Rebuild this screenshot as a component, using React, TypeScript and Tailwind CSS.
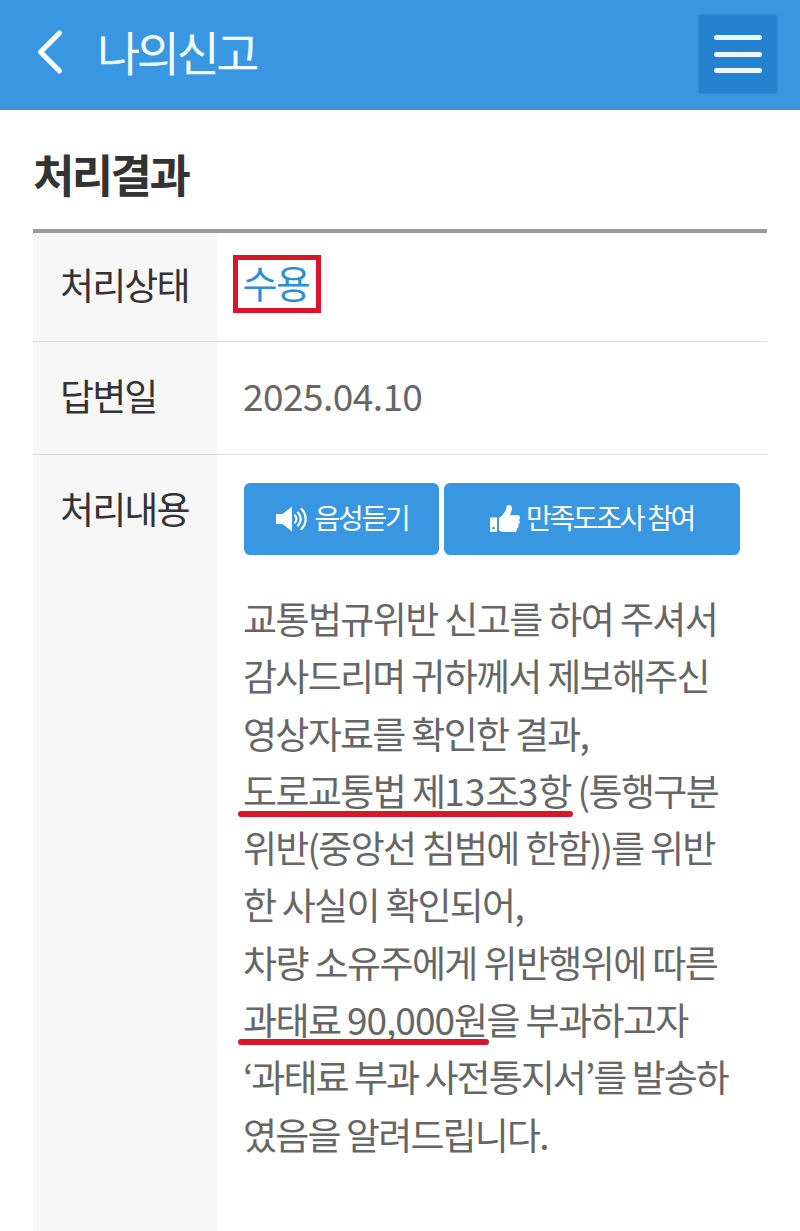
import { ChevronLeft } from 'lucide-react'

const font = { fontFamily: '"Noto Sans CJK KR", sans-serif' }

function SpeakerIcon() {
  return (
    <svg width="34" height="28" viewBox="0 0 34 28" className="shrink-0">
      <path d="M1 9h6.500L17 1.500v25L7.500 19H1z" fill="#fff" />
      <path d="M20 10.500c1.800 2 1.800 5 0 7M23 7.500c3.600 3.800 3.600 9.200 0 13M26.500 4c5.500 5.500 5.500 14.500 0 20" fill="none" stroke="#fff" strokeWidth="2.200" strokeLinecap="round" />
    </svg>
  )
}

function ThumbIcon() {
  return (
    <svg width="30" height="28" viewBox="0 0 30 28" className="shrink-0">
      <path d="M0 12.500h7V27H0z" fill="#fff" />
      <circle cx="3.500" cy="23" r="1.300" fill="#3996e0" />
      <path d="M9 13c3-2 6-5 7-9 .5-2.500 1-4 3-4 2.500 0 3.500 2.500 2.500 6-.4 1.500-1 3-1.500 4h7c2 0 3 1.300 3 2.800 0 1-.5 1.800-1.200 2.300.7.600 1 1.300 1 2.200 0 1.200-.7 2-1.600 2.500.3.500.4 1 .4 1.500 0 1.200-.8 2-1.800 2.400.1.400.1.700.1 1 0 1.500-1.200 2.300-2.900 2.300H14c-2 0-3.500-.7-5-1.500z" fill="#fff" />
    </svg>
  )
}

export default function App() {
  return (
    <div className="h-[1231px] w-[800px] overflow-hidden bg-white flex flex-col" style={font}>
      {/* Header */}
      <header className="h-[110px] shrink-0 bg-[#3996e0] flex items-center justify-between pl-[12px] pr-[22px]">
        <div className="flex items-center">
          <ChevronLeft size={76} strokeWidth={1.6} className="text-white -mt-[6px]" />
          <h1 className="ml-[9px] text-[47px] leading-none font-normal tracking-[-3.500px] text-[#eefaff] relative -top-[5px]">나의신고</h1>
        </div>
        <button className="w-[80px] h-[80px] rounded-[4px] bg-[#2582cf] border border-[#2f8bd6] flex flex-col items-center justify-center gap-[11.500px] -mt-[2px]">
          <span className="block w-[48px] h-[5px] rounded-full bg-[#e8faff]" />
          <span className="block w-[48px] h-[5px] rounded-full bg-[#e8faff]" />
          <span className="block w-[48px] h-[5px] rounded-full bg-[#e8faff]" />
        </button>
      </header>

      <main className="flex-1 px-[33px] flex flex-col min-h-0">
        <h2 className="h-[119px] shrink-0 pt-[34px] text-[45px] leading-[60px] font-bold tracking-[-2.600px] text-[#333]">처리결과</h2>

        {/* Result table */}
        <div className="flex-1 flex flex-col border-t-[4px] border-[#999]">
          <div className="h-[109px] flex border-b border-[#ddd] shrink-0">
            <div className="w-[184px] bg-[#f7f7f7] pl-[27px] pt-[26px] text-[37px] leading-[50px] tracking-[-1.900px] text-[#333]">처리상태</div>
            <div className="flex-1 pl-[16px] pt-[22px]">
              <span className="inline-block w-[88px] h-[58px] border-[5px] border-[#d7152b] pr-[2px] text-center text-[38px] leading-[44px] tracking-[-1.500px] text-[#2d8ed6]">수용</span>
            </div>
          </div>
          <div className="h-[113px] flex border-b border-[#ddd] shrink-0">
            <div className="w-[184px] bg-[#f7f7f7] pl-[27px] pt-[28px] text-[37px] leading-[50px] tracking-[-1.900px] text-[#333]">답변일</div>
            <div className="flex-1 pl-[26px] pt-[28px] text-[37px] leading-[50px] tracking-[-0.550px] text-[#666]">2025.04.10</div>
          </div>
          <div className="flex-1 flex">
            <div className="w-[184px] bg-[#f7f7f7] pl-[27px] pt-[28px] text-[37px] leading-[50px] tracking-[-1.900px] text-[#333]">처리내용</div>
            <div className="flex-1 pl-[27px] pt-[28px]">
              <div className="flex gap-[5px]">
                <button className="w-[195px] h-[72px] rounded-[6px] bg-[#3996e0] text-white flex items-center justify-center gap-[6px] text-[28px] leading-none tracking-[-2.300px]">
                  <SpeakerIcon />
                  <span className="-mt-[5px]">음성듣기</span>
                </button>
                <button className="w-[296px] h-[72px] rounded-[6px] bg-[#3996e0] text-white flex items-center justify-center gap-[6px] text-[28px] leading-none tracking-[-2.300px]">
                  <ThumbIcon />
                  <span className="-mt-[5px]">만족도조사 참여</span>
                </button>
              </div>
              <div className="mt-[35px] -ml-[1px] text-[37px] leading-[57.300px] tracking-[-1.600px] text-[#666] whitespace-nowrap">
                <div>교통법규위반 신고를 하여 주셔서</div>
                <div className="tracking-[-1.700px]">감사드리며 귀하께서 제보해주신</div>
                <div className="tracking-[-1.700px]">영상자료를 확인한 결과,</div>
                <div className="relative">
                  도로교통법 제<span className="tracking-[0px]">13</span>조<span className="tracking-[0px]">3</span>항 (통행구분
                  <span className="absolute left-[-5px] top-[49px] w-[335px] h-[6px] rounded-full bg-[#d7152b]" />
                </div>
                <div className="tracking-[-1.750px]">위반(중앙선 침범에 한함))를 위반</div>
                <div className="tracking-[-1.750px]">한 사실이 확인되어,</div>
                <div>차량 소유주에게 위반행위에 따른</div>
                <div className="relative">
                  과태료 <span className="tracking-[-1px]">90,000</span>원을 부과하고자
                  <span className="absolute left-[-5px] top-[48px] w-[251px] h-[6px] rounded-full bg-[#d7152b]" />
                </div>
                <div className="tracking-[-1.950px]">‘과태료 부과 사전통지서’를 발송하</div>
                <div className="tracking-[-1.850px]">였음을 알려드립니다.</div>
              </div>
            </div>
          </div>
        </div>
      </main>
    </div>
  )
}
